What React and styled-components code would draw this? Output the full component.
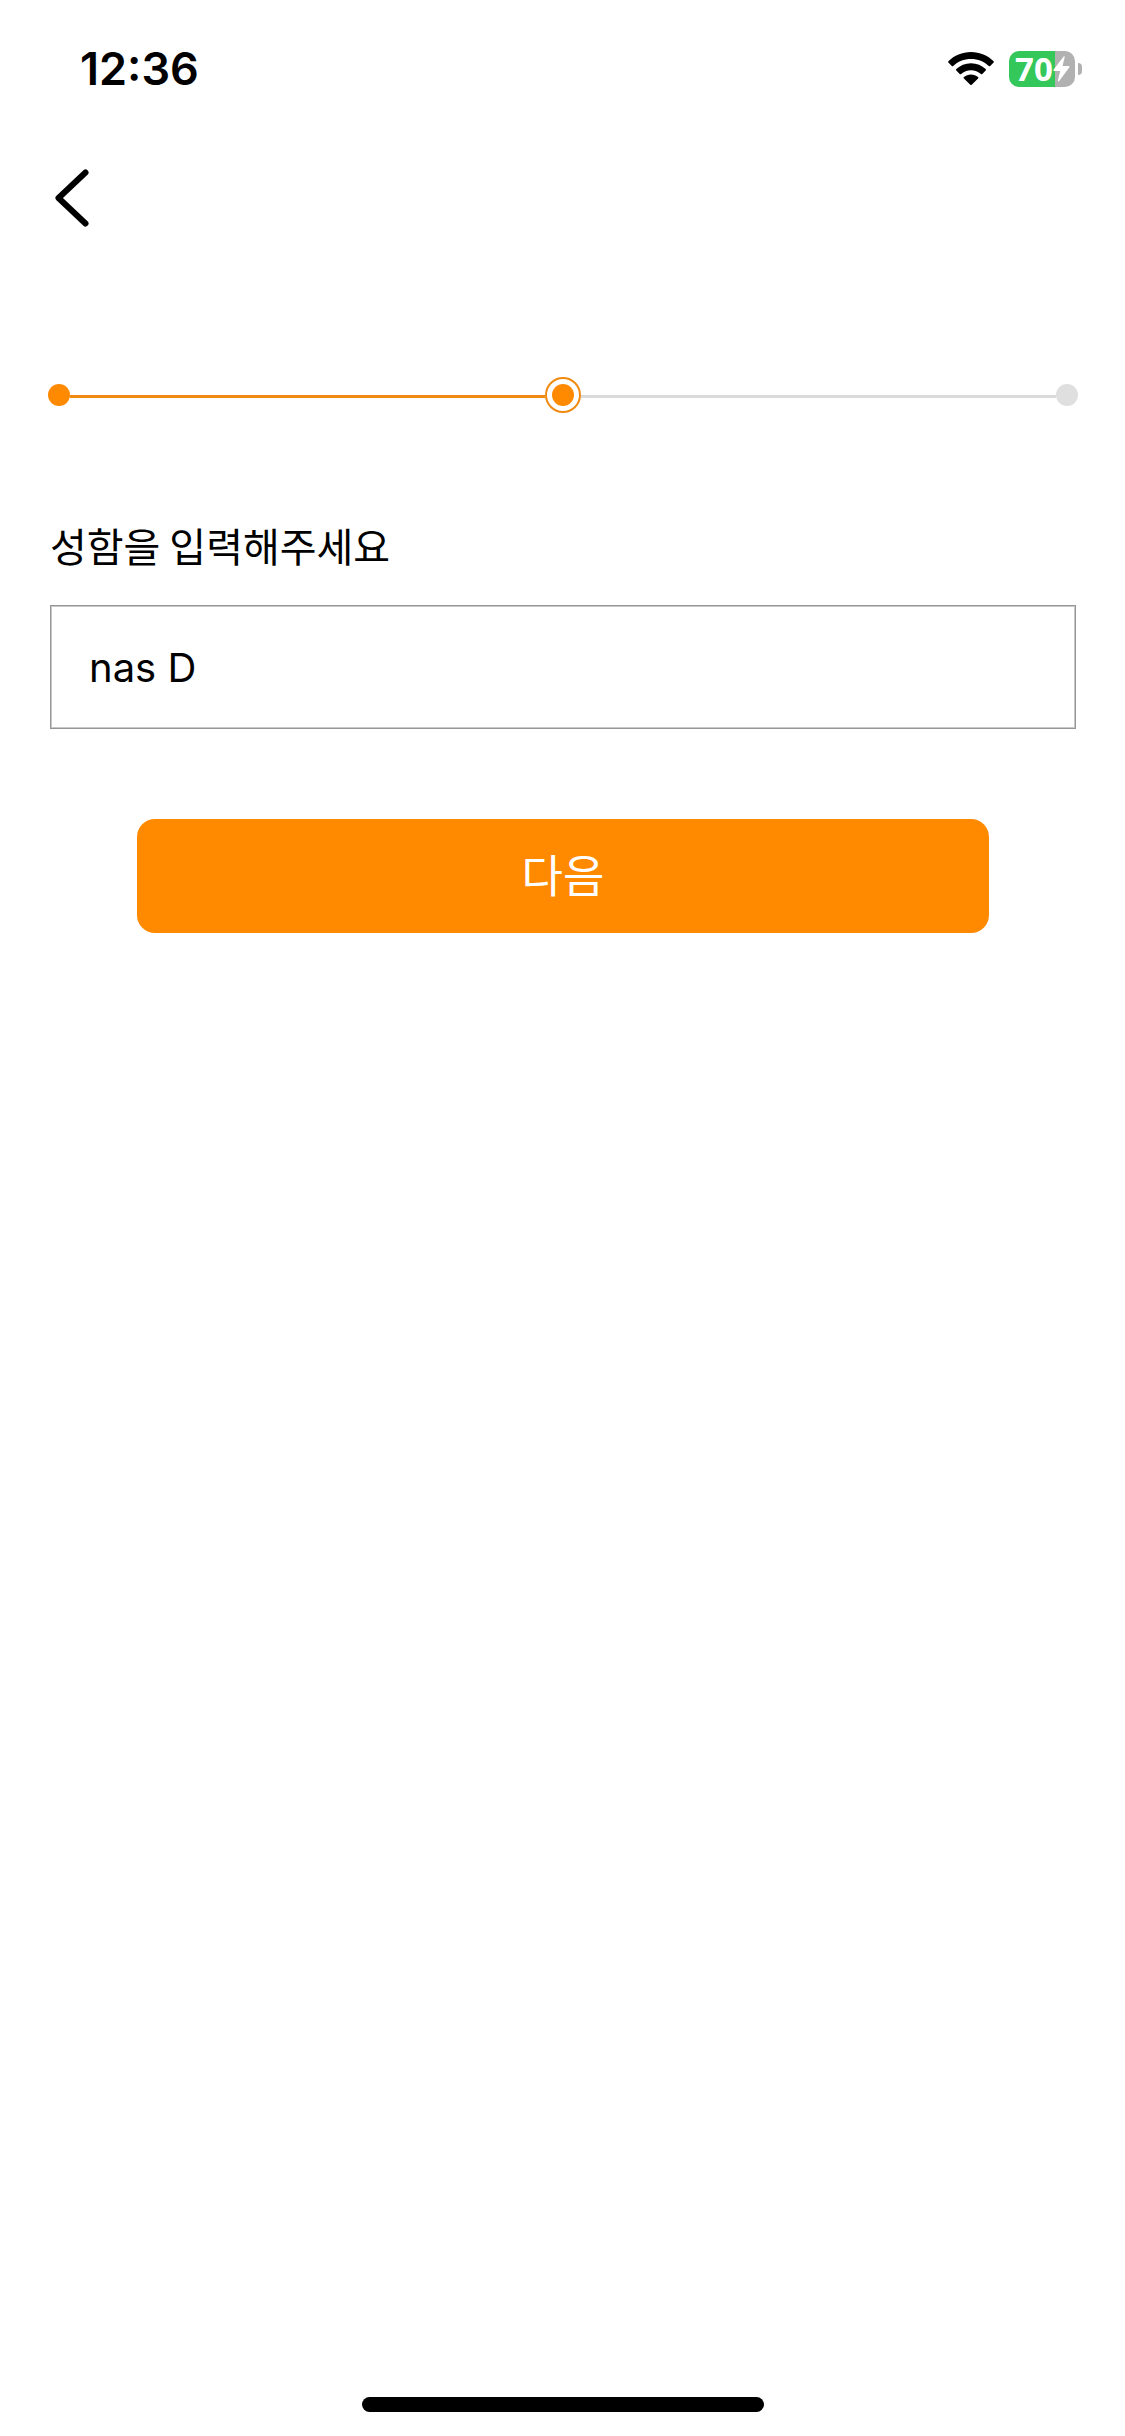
import React, { useState } from "react";
//Styling
import styled, { createGlobalStyle } from "styled-components";

const STEPS = ["done", "current", "todo"];

const App = () => {
	const [name, setName] = useState("nas D");

	return (
		<>
			<GlobalStyle />
			<Page>
				<StatusBar>
					<Time>12:36</Time>
					<StatusIcons>
						<WifiIcon />
						<Battery level={70} />
					</StatusIcons>
				</StatusBar>

				<Header>
					<BackButton type="button" aria-label="뒤로">
						<svg width="40" height="64" viewBox="0 0 40 64" fill="none">
							<path
								d="M35.500 6.500 L8.500 32 L35.500 57.500"
								stroke="#000"
								strokeWidth="6"
								strokeLinecap="round"
								strokeLinejoin="round"
							/>
						</svg>
					</BackButton>
				</Header>

				<Progress>
					{STEPS.map((state, index) => (
						<React.Fragment key={state}>
							{index > 0 && <Line $active={state !== "todo"} />}
							{state === "current" ? (
								<Ring>
									<Dot $active />
								</Ring>
							) : (
								<Dot $active={state === "done"} />
							)}
						</React.Fragment>
					))}
				</Progress>

				<Form onSubmit={(e) => e.preventDefault()}>
					<Label htmlFor="name">성함을 입력해주세요</Label>
					<Input
						id="name"
						type="text"
						value={name}
						onChange={(e) => setName(e.target.value)}
					/>
					<NextButton type="submit">다음</NextButton>
				</Form>

				<HomeBar />
			</Page>
		</>
	);
};

const WifiIcon = () => (
	<svg width="46" height="34" viewBox="0 0 46 34" fill="#000">
		<path d="M23 0C31.800 0 39.800 3.500 45.600 9.200C46 9.600 46 10.200 45.600 10.600L42.200 14C41.800 14.400 41.200 14.400 40.800 14C36.200 9.600 29.900 7 23 7C16.100 7 9.800 9.600 5.200 14C4.800 14.400 4.200 14.400 3.800 14L0.400 10.600C0 10.200 0 9.600 0.400 9.200C6.200 3.500 14.200 0 23 0Z" />
		<path d="M23 11.300C28.700 11.300 33.900 13.500 37.700 17.100C38.100 17.500 38.100 18.100 37.700 18.500L34.300 21.900C33.900 22.300 33.300 22.300 32.900 21.900C30.300 19.600 26.800 18.200 23 18.200C19.200 18.200 15.700 19.600 13.100 21.900C12.700 22.300 12.100 22.300 11.700 21.900L8.300 18.500C7.900 18.100 7.900 17.500 8.300 17.100C12.100 13.500 17.300 11.300 23 11.300Z" />
		<path d="M23 22.600C25.700 22.600 28.100 23.500 30 25C30.500 25.400 30.500 26 30.100 26.400L23.700 32.700C23.300 33.100 22.700 33.100 22.300 32.700L15.900 26.400C15.500 26 15.500 25.400 16 25C17.900 23.500 20.300 22.600 23 22.600Z" />
	</svg>
);

const Battery = ({ level }) => (
	<BatteryWrap>
		<BatteryBody $level={level}>
			{level}
			<svg width="17" height="26" viewBox="0 0 17 26" fill="#fff">
				<path d="M10.500 0.700C11.200 -0.100 12 0.200 11.700 1.200L9.500 10H15.500C16.500 10 16.800 10.900 16.200 11.600L6.200 25C5.500 25.900 4.600 25.500 4.900 24.500L7.200 15H1.200C0.300 15 0 14.100 0.600 13.400Z" />
			</svg>
		</BatteryBody>
		<BatteryCap />
	</BatteryWrap>
);

const GlobalStyle = createGlobalStyle`
	* {
		box-sizing: border-box;
	}

	body {
		margin: 0;
		background: #fff;
		color: #000;
		font-family: Inter, "Noto Sans CJK KR", sans-serif;
	}

	svg {
		display: block;
		flex-shrink: 0;
	}

	button,
	input {
		font-family: inherit;
	}
`;

const Page = styled.div`
	min-height: 100vh;
	display: flex;
	flex-direction: column;
`;

const StatusBar = styled.div`
	height: 138px;
	padding: 0 43px 0 80px;
	display: flex;
	align-items: center;
	justify-content: space-between;
`;

const Time = styled.span`
	font-size: 45px;
	line-height: 52px;
	font-weight: 600;
`;

const StatusIcons = styled.div`
	display: flex;
	align-items: center;
	gap: 15px;
`;

const BatteryWrap = styled.div`
	display: flex;
	align-items: center;
	gap: 3px;
`;

const BatteryBody = styled.div`
	width: 66px;
	height: 36px;
	padding-left: 6px;
	border-radius: 10px;
	display: flex;
	align-items: center;
	background: linear-gradient(
		to right,
		#34c759 ${({ $level }) => $level}%,
		#b1b1b1 ${({ $level }) => $level}%
	);
	color: #fff;
	font-family: "Noto Sans", sans-serif;
	font-size: 33px;
	line-height: 36px;
	font-weight: 700;
`;

const BatteryCap = styled.span`
	width: 4px;
	height: 12px;
	border-radius: 0 4px 4px 0;
	background: #b1b1b1;
`;

const Header = styled.header`
	height: 120px;
	padding: 0 50px;
	display: flex;
	align-items: center;
`;

const BackButton = styled.button`
	padding: 0;
	border: none;
	background: none;
	cursor: pointer;
`;

const Progress = styled.div`
	height: 36px;
	margin: 119px 47px 0 48px;
	display: flex;
	align-items: center;
`;

const Line = styled.span`
	flex: 1;
	height: 3px;
	margin-top: 3px;
	background: ${({ $active }) => ($active ? "#f08a12" : "#dadada")};
`;

const Dot = styled.span`
	width: 22px;
	height: 22px;
	border-radius: 50%;
	background: ${({ $active }) => ($active ? "#ff8a00" : "#dfdfdf")};
`;

const Ring = styled.span`
	width: 36px;
	height: 36px;
	border: 2px solid #f08a12;
	border-radius: 50%;
	display: flex;
	align-items: center;
	justify-content: center;
`;

const Form = styled.form`
	padding: 102px 49px 0 50px;
	display: flex;
	flex-direction: column;
`;

const Label = styled.label`
	font-family: "Noto Sans CJK KR", sans-serif;
	font-size: 40px;
	line-height: 60px;
`;

const Input = styled.input`
	width: 100%;
	height: 124px;
	margin-top: 30px;
	padding: 0 38px;
	border: 1px solid #969696;
	border-radius: 0;
	box-shadow: inset 0 0 0 1px #c8c8c8;
	outline: none;
	background: #fff;
	color: #000;
	font-size: 40px;
`;

const NextButton = styled.button`
	height: 114px;
	margin: 90px 87px 0;
	padding: 0 0 6px;
	border: none;
	border-radius: 18px;
	background: #ff8a00;
	color: #fff;
	font-size: 45px;
	cursor: pointer;
`;

const HomeBar = styled.div`
	width: 402px;
	height: 15px;
	margin: auto auto 24px;
	border-radius: 8px;
	background: #000;
`;

export default App;
